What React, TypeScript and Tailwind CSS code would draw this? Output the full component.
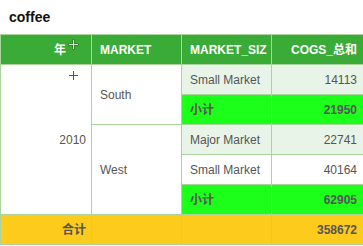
import React from "react";

const font = { fontFamily: '"Liberation Sans", Arial, "Noto Sans CJK SC", sans-serif' };

function Plus({ header }: { header?: boolean }) {
  return (
    <svg width="11" height="11" viewBox="0 0 11 11" className="block">
      {header ? (
        <>
          <path d="M5.5 0.5v10M0.5 5.5h10" stroke="#2f6e2c" strokeWidth="2.2" />
          <path d="M5.5 1v9M1 5.5h9" stroke="#cfe9cb" strokeWidth="1" />
        </>
      ) : (
        <path d="M5.5 1v9M1 5.5h9" stroke="#555" strokeWidth="1" />
      )}
    </svg>
  );
}

const bd = "border border-[#a9d59c]";
const th = `${bd} h-[30px] p-0 text-[12px] font-bold text-white bg-[#3aab36]`;
const td = `${bd} h-[30px] p-0 text-[12px] text-[#555]`;

export default function App() {
  return (
    <div className="w-[363px] h-[246px] bg-white overflow-hidden" style={font}>
      <div className="h-[34px] pl-[9px] flex items-center text-[14px] font-bold text-[#111]">coffee</div>
      <table className="table-fixed border-collapse w-[363px]">
        <colgroup>
          <col className="w-[91px]" />
          <col className="w-[90px]" />
          <col className="w-[90px]" />
          <col className="w-[92px]" />
        </colgroup>
        <thead>
          <tr>
            <th className={`${th} relative text-right pr-[25px]`}>
              年
              <span className="absolute right-[12px] top-[4px]">
                <Plus header />
              </span>
            </th>
            <th className={`${th} text-left pl-[8px]`}>MARKET</th>
            <th className={`${th} text-left pl-[8px] whitespace-nowrap overflow-hidden`}>MARKET_SIZ</th>
            <th className={`${th} text-right pr-[6px]`}>COGS_总和</th>
          </tr>
        </thead>
        <tbody>
          <tr>
            <td rowSpan={5} className={`${td} relative text-right pr-[5px] align-middle`}>
              <span className="absolute right-[12px] top-[5px]">
                <Plus />
              </span>
              2010
            </td>
            <td rowSpan={2} className={`${td} pl-[8px]`}>South</td>
            <td className={`${td} pl-[8px] bg-[#e8f4e7]`}>Small Market</td>
            <td className={`${td} pr-[6px] text-right bg-[#e8f4e7]`}>14113</td>
          </tr>
          <tr>
            <td className={`${td} pl-[8px] bg-[#1bff1b] font-bold`}>小计</td>
            <td className={`${td} pr-[6px] text-right bg-[#1bff1b] font-bold`}>21950</td>
          </tr>
          <tr>
            <td rowSpan={3} className={`${td} pl-[8px]`}>West</td>
            <td className={`${td} pl-[8px] bg-[#e8f4e7]`}>Major Market</td>
            <td className={`${td} pr-[6px] text-right bg-[#e8f4e7]`}>22741</td>
          </tr>
          <tr>
            <td className={`${td} pl-[8px]`}>Small Market</td>
            <td className={`${td} pr-[6px] text-right`}>40164</td>
          </tr>
          <tr>
            <td className={`${td} pl-[8px] bg-[#1bff1b] font-bold`}>小计</td>
            <td className={`${td} pr-[6px] text-right bg-[#1bff1b] font-bold`}>62905</td>
          </tr>
          <tr>
            <td className={`${td} pr-[5px] text-right bg-[#fdcb1b] font-bold`}>合计</td>
            <td className={`${td} bg-[#fdcb1b]`}></td>
            <td className={`${td} bg-[#fdcb1b]`}></td>
            <td className={`${td} pr-[6px] text-right bg-[#fdcb1b] font-bold`}>358672</td>
          </tr>
        </tbody>
      </table>
    </div>
  );
}
